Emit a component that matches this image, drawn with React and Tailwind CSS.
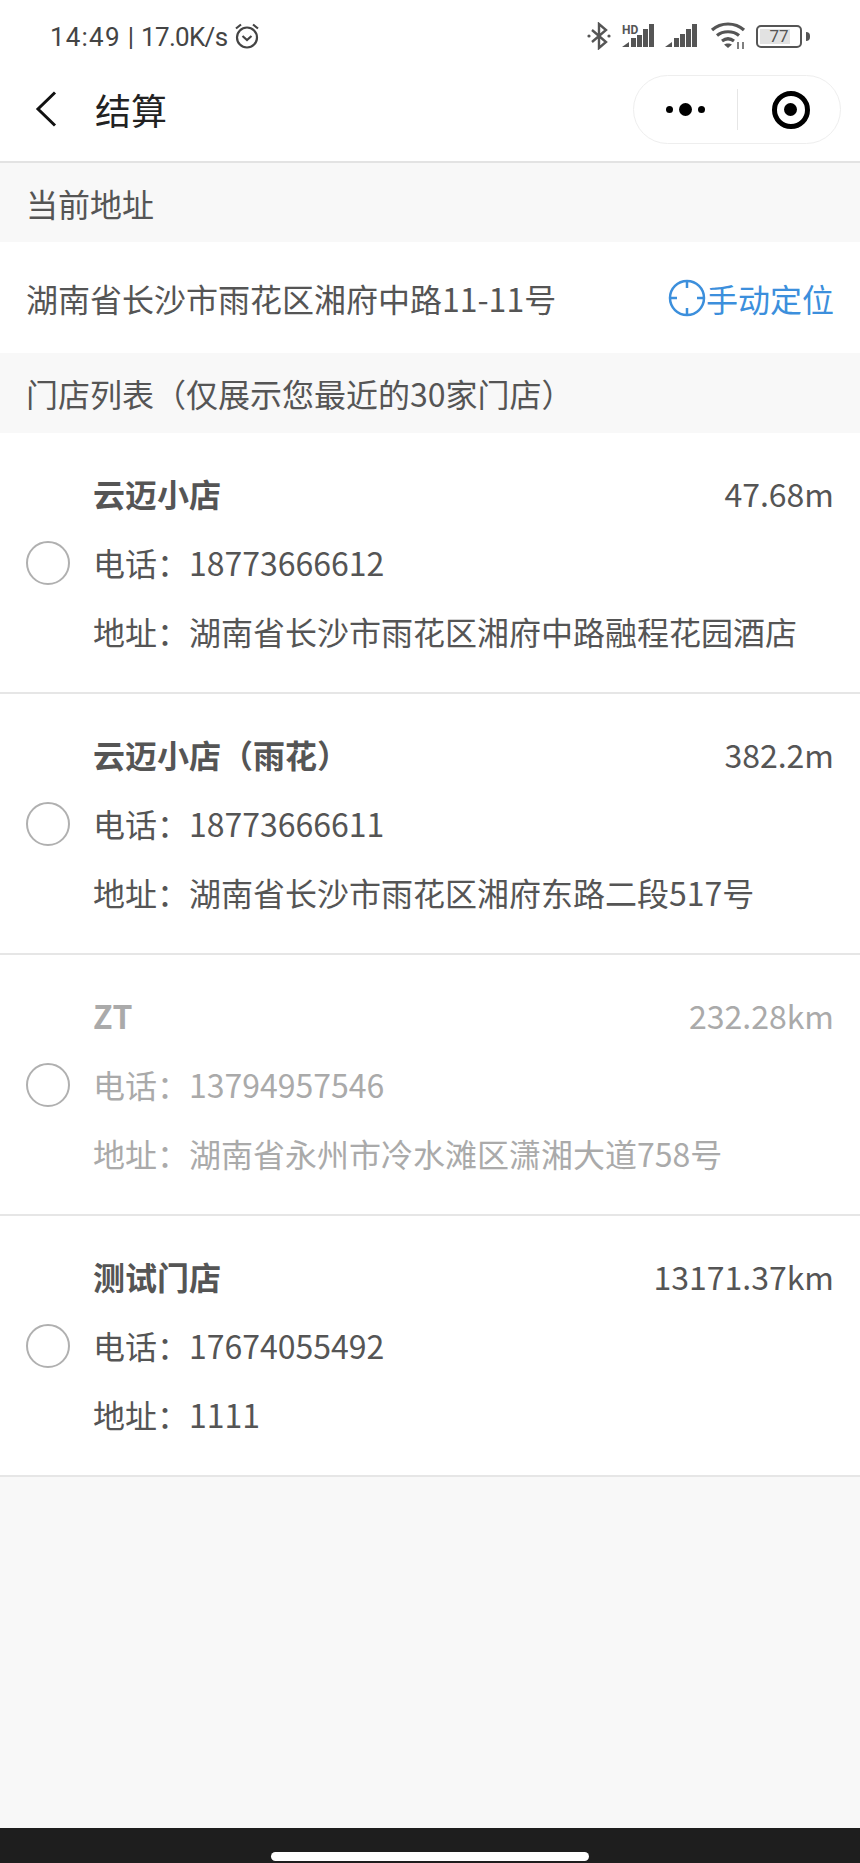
import { useState } from 'react'

const CJK = { fontFamily: '"Noto Sans CJK SC", "Noto Sans", sans-serif' }

const stores = [
  { name: '云迈小店', distance: '47.68m', phone: '18773666612', address: '湖南省长沙市雨花区湘府中路融程花园酒店' },
  { name: '云迈小店（雨花）', distance: '382.2m', phone: '18773666611', address: '湖南省长沙市雨花区湘府东路二段517号' },
  { name: 'ZT', distance: '232.28km', phone: '13794957546', address: '湖南省永州市冷水滩区潇湘大道758号', disabled: true },
  { name: '测试门店', distance: '13171.37km', phone: '17674055492', address: '1111' },
]

function SignalBars({ hd, className }) {
  return (
    <svg width="32" height="26" viewBox="0 0 32 26" fill="currentColor" className={className}>
      <path d="M0 24l7-5v5z" />
      <rect x="9" y="15" width="5" height="9" />
      <rect x="15" y="11" width="5" height="13" />
      <rect x="21" y="6" width="5" height="18" />
      <rect x="27" y="1" width="5" height="23" />
      {hd && (
        <>
          <rect x="0" y="0" width="20" height="12" fill="#fff" />
          <text x="0" y="11" fontSize="12" fontWeight="700" fontFamily="Roboto, sans-serif">HD</text>
        </>
      )}
    </svg>
  )
}

function StatusIcons() {
  return (
    <div className="flex items-center text-[#555]">
      <svg width="24" height="28" viewBox="0 0 24 28" fill="none" stroke="currentColor" strokeWidth="2.4">
        <path d="M5 8l14 12-7 6V2l7 6L5 20" />
        <circle cx="2" cy="14" r="1.6" fill="currentColor" stroke="none" />
        <circle cx="22" cy="14" r="1.6" fill="currentColor" stroke="none" />
      </svg>
      <SignalBars hd className="ml-[11px]" />
      <SignalBars className="ml-[11px]" />
      <svg width="36" height="28" viewBox="0 0 36 28" fill="none" stroke="currentColor" className="ml-[13px]">
        <path d="M2 8c9-8 23-8 32 0" strokeWidth="3.2" />
        <path d="M7 13.500c6-5 16-5 22 0" strokeWidth="3.2" />
        <path d="M12 19c4-3 8-3 12 0" strokeWidth="3.2" />
        <path d="M18 26l-4-3.500c2-1.500 6-1.500 8 0z" fill="currentColor" stroke="none" />
        <path d="M28 20v7M33 20v7" strokeWidth="1.500" />
      </svg>
      <div className="ml-[10px] flex items-center">
        <div className="relative flex h-[23px] w-[46px] items-center justify-center rounded-[5px] border-[2.5px] border-[#555]">
          <div className="absolute bottom-[2px] left-[2px] top-[2px] w-[30px] bg-[#e2e2e2]" />
          <span className="relative text-[17px] leading-none" style={{ fontFamily: 'Roboto, sans-serif' }}>77</span>
        </div>
        <div className="ml-[4px] h-[9px] w-[4px] rounded-r-sm bg-[#555]" />
      </div>
    </div>
  )
}

function StatusBar() {
  return (
    <div className="flex h-[60px] items-center justify-between pr-[50px] pt-[12px]">
      <div className="flex items-center pl-[50px] pt-[1px] text-[26px] leading-none text-[#444]" style={{ fontFamily: 'Roboto, sans-serif' }}>
        <span className="tracking-[1.2px]">14:49</span>
        <span className="ml-[7px]">|</span>
        <span className="ml-[7px] tracking-[-0.7px]">17.0K/s</span>
        <svg width="28" height="28" viewBox="0 0 28 28" fill="none" stroke="currentColor" strokeWidth="2.200" className="ml-[6px] -mt-[2px]">
          <circle cx="14" cy="15.500" r="10" />
          <path d="M9.500 14l4.500 4 4.500-4" />
          <path d="M3 6.500L8 2.500M25 6.500L20 2.500" />
        </svg>
      </div>
      <StatusIcons />
    </div>
  )
}

function NavBar() {
  return (
    <div className="flex h-[103px] items-start justify-between border-b-2 border-[#e3e3e3] pr-[19px]">
      <div className="flex items-center pl-[35px] pt-[24px]">
        <svg width="22" height="36" viewBox="0 0 22 36" fill="none" stroke="#111" strokeWidth="3">
          <path d="M20 1.500L3 18l17 16.500" />
        </svg>
        <span className="ml-[38px] text-[36px] leading-[50px] text-[#222]" style={CJK}>结算</span>
      </div>
      <div className="mt-[15px] flex h-[69px] w-[208px] items-center rounded-full border border-[#eeeeee] bg-white">
        <div className="flex w-[103px] items-center justify-center gap-[6px]">
          <span className="size-[7px] rounded-full bg-black" />
          <span className="size-[13px] rounded-full bg-black" />
          <span className="size-[7px] rounded-full bg-black" />
        </div>
        <div className="h-[41px] w-px bg-[#e6e6e6]" />
        <div className="flex flex-1 items-center justify-center pl-[3px]">
          <div className="flex size-[38px] items-center justify-center rounded-full border-[5px] border-black">
            <span className="size-[13px] rounded-full bg-black" />
          </div>
        </div>
      </div>
    </div>
  )
}

function StoreRow({ store, selected, onSelect }) {
  const tone = store.disabled ? 'text-[#aaaaaa]' : 'text-[#555555]'

  return (
    <div
      className={`flex h-[261px] items-center border-b-2 border-[#e6e6e6] bg-white pl-[26px] pr-[26px] ${tone}`}
      onClick={() => !store.disabled && onSelect(store.phone)}
    >
      <div className={`size-[44px] shrink-0 rounded-full border-2 border-[#b0b0b0] ${selected ? 'bg-[#3c8fdc]' : ''}`} />
      <div className="ml-[23px] flex-1 text-[32px] leading-[69px]">
        <div className="flex justify-between">
          <span className="font-bold">{store.name}</span>
          <span>{store.distance}</span>
        </div>
        <div>电话：{store.phone}</div>
        <div>地址：{store.address}</div>
      </div>
    </div>
  )
}

export default function App() {
  const [selectedPhone, setSelectedPhone] = useState('')

  return (
    <div className="flex h-[1863px] w-[860px] flex-col bg-[#f8f8f8]" style={CJK}>
      <div className="bg-white">
        <StatusBar />
        <NavBar />
      </div>

      <div className="flex h-[79px] items-center px-[26px] text-[32px] text-[#555555]">当前地址</div>
      <div className="flex h-[111px] items-center justify-between bg-white px-[26px] text-[32px] text-[#555555]">
        <span>湖南省长沙市雨花区湘府中路11-11号</span>
        <span className="flex items-center text-[#3c8fdc]">
          <svg width="38" height="38" viewBox="0 0 38 38" fill="none" stroke="currentColor" strokeWidth="2.500">
            <circle cx="19" cy="19" r="17" />
            <path d="M19 2v7M19 29v7M2 19h7M29 19h7" />
          </svg>
          手动定位
        </span>
      </div>
      <div className="flex h-[80px] items-center px-[26px] text-[32px] text-[#555555]">门店列表（仅展示您最近的30家门店）</div>

      <div>
        {stores.map((store) => (
          <StoreRow
            key={store.phone}
            store={store}
            selected={selectedPhone === store.phone}
            onSelect={setSelectedPhone}
          />
        ))}
      </div>

      <div className="flex-1" />

      <div className="flex h-[35px] items-end justify-center bg-[#1e1e1e] pb-[2px]">
        <div className="h-[9px] w-[318px] rounded-full bg-white" />
      </div>
    </div>
  )
}
